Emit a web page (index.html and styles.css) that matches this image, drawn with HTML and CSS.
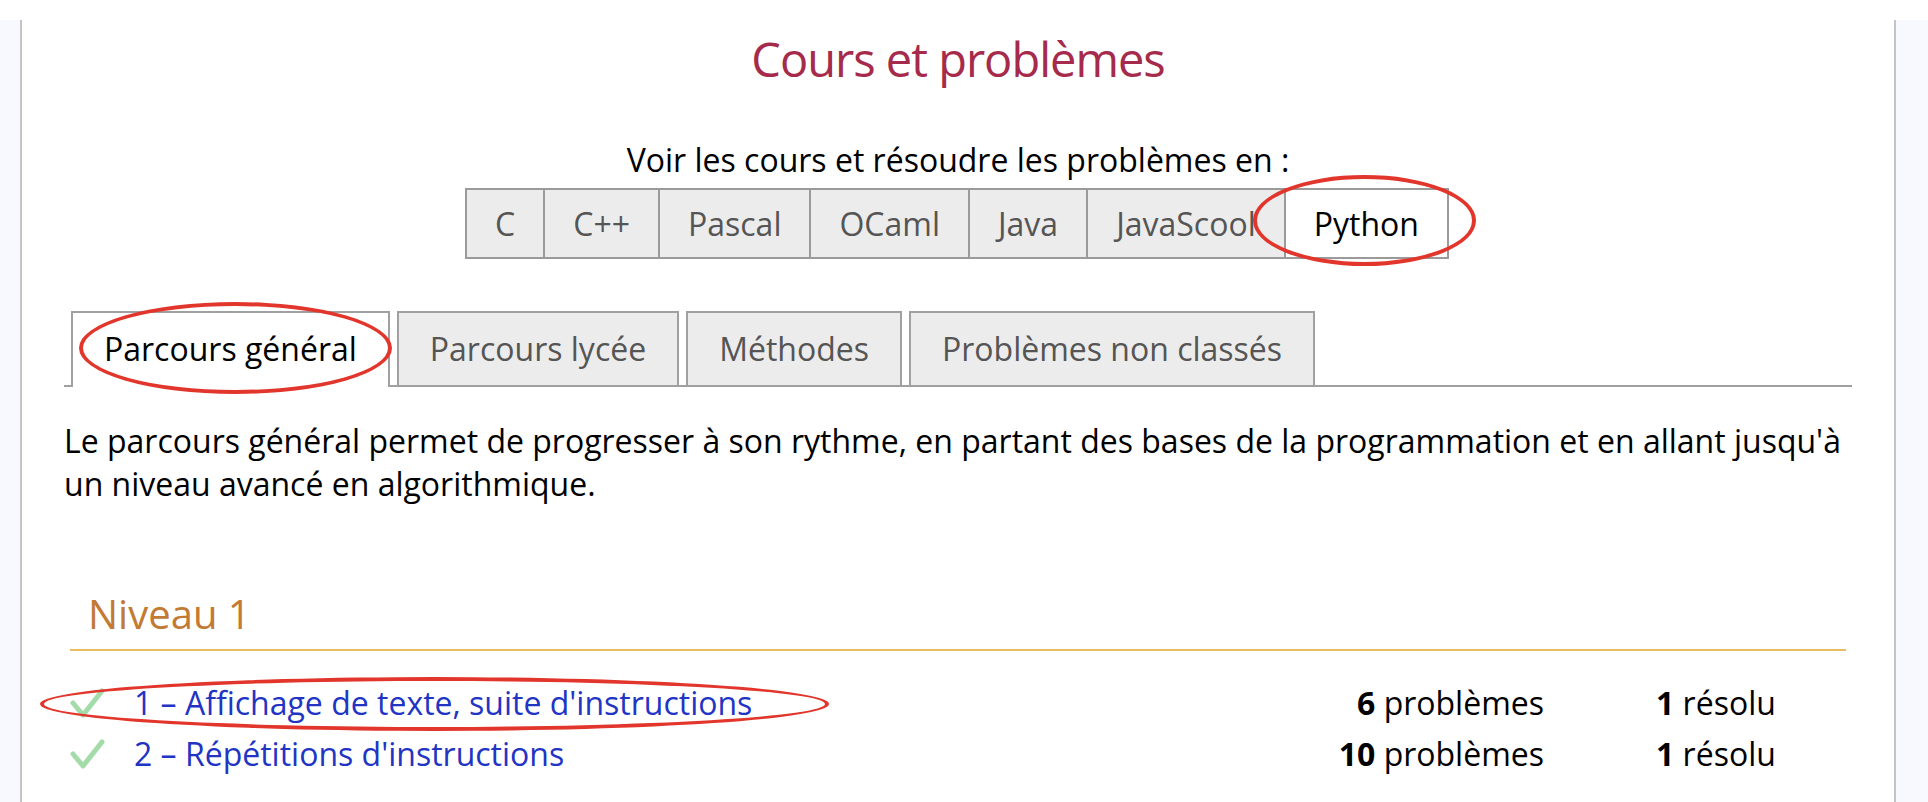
FILE: index.html
```html
<!DOCTYPE html>
<html lang="fr">
<head>
<meta charset="utf-8">
<title>Cours et problèmes</title>
<link rel="stylesheet" href="styles.css">
</head>
<body>
<div class="page">
  <aside class="side side-left"></aside>
  <main class="main">
    <h1 class="title">Cours et problèmes</h1>
    <p class="choose">Voir les cours et résoudre les problèmes en :</p>
    <div class="langs-wrap">
      <div class="langs">
        <span class="lang">C</span>
        <span class="lang">C++</span>
        <span class="lang">Pascal</span>
        <span class="lang">OCaml</span>
        <span class="lang">Java</span>
        <span class="lang">JavaScool</span>
        <span class="lang lang-active">Python<span class="mark mark-python"></span></span>
      </div>
    </div>
    <nav class="tabs">
      <span class="tab tab-active">Parcours général<span class="mark mark-tab"></span></span>
      <span class="tab">Parcours lycée</span>
      <span class="tab">Méthodes</span>
      <span class="tab">Problèmes non classés</span>
    </nav>
    <p class="intro">Le parcours général permet de progresser à son rythme, en partant des bases de la programmation et en allant jusqu'à un niveau avancé en algorithmique.</p>
    <section class="level">
      <h2 class="level-title">Niveau 1</h2>
    </section>
    <div class="rows">
      <div class="row">
        <span class="check"><svg width="36" height="30" viewBox="0 0 36 30"><polyline points="4,15 14,27 33,3" fill="none" stroke="#a3dba9" stroke-width="5" stroke-linecap="round" stroke-linejoin="round"/></svg></span>
        <a class="chapter" href="#">1 – Affichage de texte, suite d'instructions</a>
        <span class="count"><b>6</b> problèmes</span>
        <span class="solved"><b>1</b> résolu</span>
        <span class="mark mark-row"></span>
      </div>
      <div class="row">
        <span class="check"><svg width="36" height="30" viewBox="0 0 36 30"><polyline points="4,15 14,27 33,3" fill="none" stroke="#a3dba9" stroke-width="5" stroke-linecap="round" stroke-linejoin="round"/></svg></span>
        <a class="chapter" href="#">2 – Répétitions d'instructions</a>
        <span class="count"><b>10</b> problèmes</span>
        <span class="solved"><b>1</b> résolu</span>
      </div>
    </div>
  </main>
  <aside class="side side-right"></aside>
</div>
</body>
</html>
```
FILE: styles.css
```css
html, body {
  margin: 0;
  padding: 0;
  background: #ffffff;
}
body {
  font-family: "Open Sans", "Noto Sans", sans-serif;
  font-size: 32px;
  color: #000;
  overflow: hidden;
}
.page {
  margin-top: 20px;
  display: flex;
  height: 782px;
}
.side {
  background: #f7f9fe;
}
.side-left {
  width: 20px;
}
.side-right {
  flex: 1;
}
.main {
  border-left: 2px solid #c4c4c4;
  border-right: 2px solid #c4c4c4;
  padding: 7px 42px 0;
  box-sizing: content-box;
  width: 1788px;
}
.title {
  margin: 0;
  font-size: 47px;
  font-weight: 400;
  letter-spacing: -1px;
  color: #a52a4b;
  text-align: center;
  line-height: 64px;
}
.choose {
  margin: 47px 0 0;
  text-align: center;
}
.langs-wrap {
  margin-top: 7px;
  display: flex;
  justify-content: center;
}
.langs {
  display: flex;
  border: 2px solid #9a9a9a;
  margin-right: 2px;
}
.lang {
  position: relative;
  padding: 12px 28px;
  background: #ececec;
  color: #555;
  border-left: 2px solid #9a9a9a;
}
.lang:first-child {
  border-left: none;
}
.lang-active {
  background: #fff;
  color: #000;
}
.tabs {
  margin-top: 52px;
  display: flex;
  gap: 7px;
  padding-left: 7px;
  border-bottom: 2px solid #a0a0a0;
}
.tab {
  position: relative;
  padding: 14px 31px 15px;
  background: #ececec;
  color: #555;
  border: 2px solid #a0a0a0;
  border-bottom: none;
}
.tab-active {
  background: #fff;
  color: #000;
  padding-bottom: 17px;
  margin-bottom: -2px;
}
.intro {
  margin: 32px 0 0;
}
.level {
  margin: 81px 6px 0;
  border-bottom: 2px solid #e5bd62;
}
.level-title {
  margin: 0;
  padding: 0 0 8px 18px;
  font-size: 40px;
  font-weight: 400;
  color: #c27a34;
}
.rows {
  margin-top: 26px;
}
.row {
  position: relative;
  display: grid;
  grid-template-columns: 70px 1fr auto 308px;
  align-items: center;
  padding: 4px 0;
}
.check {
  display: flex;
  padding-left: 5px;
}
.chapter {
  color: #2234c4;
  text-decoration: none;
}
.count {
  text-align: right;
}
.solved {
  padding-left: 112px;
}
.mark {
  position: absolute;
  border: 4px solid #e2352b;
  border-radius: 50%;
  pointer-events: none;
}
.mark-python {
  left: -33px;
  right: -29px;
  top: -15px;
  bottom: -9px;
}
.mark-tab {
  left: 6px;
  right: -4px;
  top: -11px;
  bottom: -7px;
}
.mark-row {
  left: -24px;
  width: 789px;
  top: 0;
  height: 54px;
  box-sizing: border-box;
}
```
